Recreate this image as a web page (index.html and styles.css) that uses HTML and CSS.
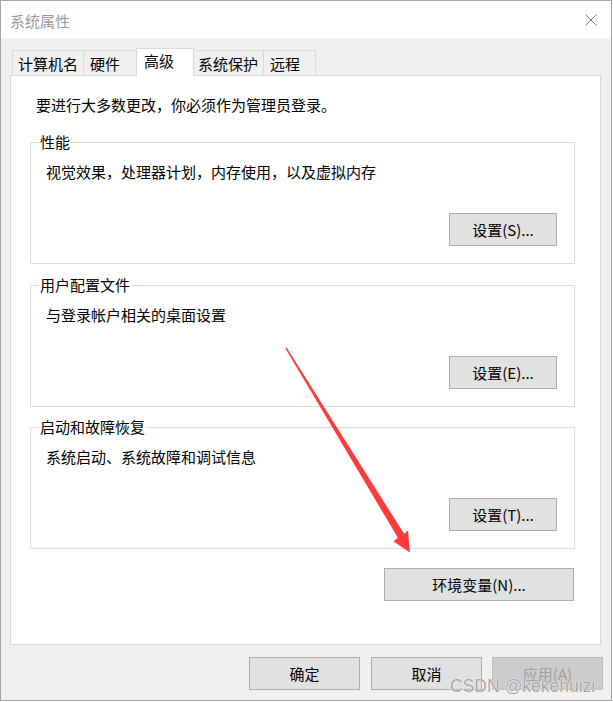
FILE: index.html
```html
<!DOCTYPE html>
<html lang="zh-CN">
<head>
<meta charset="utf-8">
<title>系统属性</title>
<link rel="stylesheet" href="styles.css">
</head>
<body>
<div class="window">
  <div class="titlebar">
    <span class="title">系统属性</span>
    <svg class="close" width="12" height="12" viewBox="0 0 12 12"><path d="M0.5 0.5 L11.5 11.5 M11.5 0.5 L0.5 11.5" stroke="#7a7a7a" stroke-width="1" fill="none"/></svg>
  </div>
  <div class="content">
    <div class="tabs">
      <div class="tab t1">计算机名</div>
      <div class="tab t2">硬件</div>
      <div class="tab t3 active">高级</div>
      <div class="tab t4">系统保护</div>
      <div class="tab t5">远程</div>
    </div>
    <div class="panel">
      <div class="intro">要进行大多数更改，你必须作为管理员登录。</div>
      <div class="group">
        <span class="legend">性能</span>
        <div class="desc">视觉效果，处理器计划，内存使用，以及虚拟内存</div>
        <div class="actions"><button class="btn btn-set">设置(S)...</button></div>
      </div>
      <div class="group">
        <span class="legend">用户配置文件</span>
        <div class="desc">与登录帐户相关的桌面设置</div>
        <div class="actions"><button class="btn btn-set">设置(E)...</button></div>
      </div>
      <div class="group g3">
        <span class="legend">启动和故障恢复</span>
        <div class="desc">系统启动、系统故障和调试信息</div>
        <div class="actions"><button class="btn btn-set">设置(T)...</button></div>
      </div>
      <div class="env-row"><button class="btn btn-env">环境变量(N)...</button></div>
    </div>
    <div class="footer">
      <button class="btn btn-foot ok">确定</button>
      <button class="btn btn-foot cancel">取消</button>
      <button class="btn btn-foot apply" disabled>应用(A)</button>
    </div>
  </div>
</div>
<svg class="arrow" width="613" height="702" viewBox="0 0 613 702">
  <polygon points="285.3,348.3 397.8,537.6 393.6,541.6 410,552.5 408,530.2 404.2,534 286.7,347.7" fill="#ff3b3b"/>
</svg>
<div class="watermark">CSDN @kekehuizi</div>
</body>
</html>
```
FILE: styles.css
```css
html, body {
  margin: 0;
  padding: 0;
  background: #ffffff;
}
body {
  width: 613px;
  height: 702px;
  position: relative;
  overflow: hidden;
  font-family: "Noto Sans CJK SC", "Noto Sans", sans-serif;
  font-size: 15px;
  color: #000;
}
.window {
  width: 612px;
  height: 701px;
  box-sizing: border-box;
  border: 1px solid #a3a3a3;
  display: flex;
  flex-direction: column;
}
.titlebar {
  height: 37px;
  background: #fff;
  display: flex;
  align-items: center;
  justify-content: space-between;
  padding: 0 14px 0 9px;
  flex: none;
}
.title {
  color: #9a9a9a;
  line-height: 20px;
  margin-top: 2px;
}
.close {
  display: block;
  margin-top: 1px;
}
.content {
  flex: 1;
  background: #f0f0f0;
  padding: 10px 0 0 0;
  display: flex;
  flex-direction: column;
}
.tabs {
  display: flex;
  align-items: flex-end;
  height: 27px;
  margin-left: 11px;
}
.tab {
  box-sizing: border-box;
  height: 25px;
  border: 1px solid #d9d9d9;
  border-bottom: none;
  margin-right: -1px;
  background: #f0f0f0;
  text-align: left;
  line-height: 20px;
  padding-top: 3px;
  white-space: nowrap;
}
.t1 { width: 72px; padding-left: 5px; }
.t2 { width: 55px; padding-left: 6px; margin-right: -2px; }
.t3 { width: 58px; padding-left: 7px; }
.t4 { width: 71px; padding-left: 4px; }
.t5 { width: 53px; padding-left: 6px; }
.tab.active {
  height: 28px;
  margin-bottom: -1px;
  background: #fff;
  padding-top: 2px;
  position: relative;
  z-index: 1;
}
.panel {
  box-sizing: border-box;
  width: 591px;
  height: 570px;
  margin-left: 9px;
  background: #fff;
  border: 1px solid #d9d9d9;
  padding: 19px 0 0 19px;
}
.intro {
  line-height: 20px;
  margin-left: 6px;
}
.group {
  position: relative;
  box-sizing: border-box;
  width: 545px;
  height: 122px;
  border: 1px solid #dcdcdc;
  margin-top: 21px;
}
.intro + .group {
  margin-top: 27px;
}
.group.g3 {
  margin-top: 20px;
}
.legend {
  position: absolute;
  top: -11px;
  left: 8px;
  padding: 0 1px;
  background: #fff;
  line-height: 20px;
}
.desc {
  line-height: 20px;
  padding: 19px 0 0 15px;
}
.actions {
  display: flex;
  justify-content: flex-end;
  padding-right: 17px;
  margin-top: 31px;
}
.btn {
  box-sizing: border-box;
  height: 33px;
  border: 1px solid #adadad;
  background: #e1e1e1;
  font-family: "Noto Sans CJK SC", "Noto Sans", sans-serif;
  font-size: 15px;
  color: #000;
  padding: 0;
  line-height: 20px;
}
.btn-set {
  width: 108px;
}
.env-row {
  width: 545px;
  display: flex;
  justify-content: flex-end;
  padding-right: 1px;
  box-sizing: border-box;
  margin-top: 19px;
}
.btn-env {
  width: 190px;
}
.footer {
  display: flex;
  justify-content: flex-end;
  padding-right: 8px;
  margin-top: 12px;
}
.btn-foot {
  width: 111px;
}
.ok {
  margin-right: 11px;
}
.cancel {
  margin-right: 10px;
}
.apply {
  background: #cccccc;
  border-color: #bfbfbf;
  color: #a0a0a0;
}
.arrow {
  position: absolute;
  left: 0;
  top: 0;
  pointer-events: none;
}
.watermark {
  position: absolute;
  left: 450px;
  top: 675px;
  font-family: "Liberation Sans", Arial, sans-serif;
  font-size: 17.5px;
  line-height: 22px;
  color: rgba(150, 150, 150, 0.85);
  text-shadow: 0 0 1px #fff, 0 0 1px #fff;
  white-space: nowrap;
}
```
